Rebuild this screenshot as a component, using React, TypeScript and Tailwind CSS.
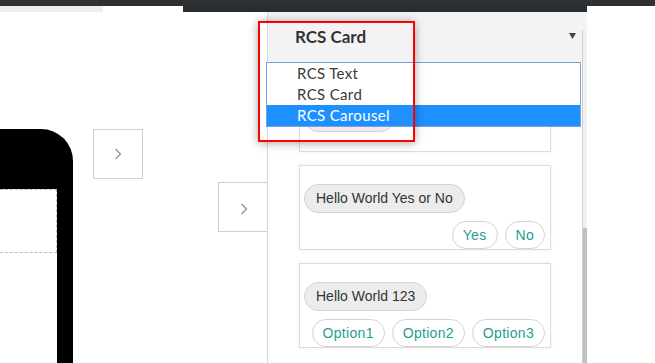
import React from 'react';

const Chevron = () => (
    <svg width="8" height="12" viewBox="0 0 8 12" fill="none">
        <polyline points="1.5,1 6.5,6 1.5,11" stroke="#8a8a8a" strokeWidth="1.1" />
    </svg>
);

const Chip = ({ text }: { text?: string }) => (
    <div
        className={
            'h-[29px] self-start flex items-center px-[11px] rounded-full bg-[#ececec] border border-[#d3d3d3] text-[14px] text-[#333] font-[\'Liberation_Sans\',sans-serif] ' +
            (text ? '' : 'w-[91px]')
        }
    >
        {text}
    </div>
);

const Reply = ({ text }: { text: string }) => (
    <div className="h-[28px] flex items-center px-[10px] rounded-full bg-white border border-[#d4d4d4] text-[14px] tracking-[0.3px] text-[#1f9e90] font-['Liberation_Sans',sans-serif]">
        {text}
    </div>
);

const Card = ({ chip, replies, top = 18 }: { chip?: string; replies?: string[]; top?: number }) => (
    <div
        className={
            'w-[252px] h-[85px] shrink-0 flex flex-col bg-white border border-[#dcdcdc] pl-[4px] pr-[5px] shadow-[0_0_4px_rgba(0,0,0,0.05)] ' +
            (top === 18 ? 'pt-[18px]' : 'pt-[35px]')
        }
    >
        <Chip text={chip} />
        {replies && (
            <div className="mt-[8px] flex justify-end gap-[7px]">
                {replies.map((r) => (
                    <Reply key={r} text={r} />
                ))}
            </div>
        )}
    </div>
);

export default function App() {
    return (
        <div className="w-[655px] h-[363px] relative overflow-hidden bg-white font-['Lato',sans-serif]">
            <div className="h-[6px] bg-[#2e3134]" />
            <div className="h-[6px] flex">
                <div className="w-[103px] bg-[#eeeeee]" />
                <div className="w-[80px] bg-white" />
                <div className="w-[404px] bg-[#2a2d30]" />
                <div className="flex-1 bg-white" />
            </div>

            <div className="h-[351px] flex">
                {/* left preview area */}
                <div className="w-[267px] flex items-start pt-[117px]">
                    <div className="w-[73px] self-stretch bg-black rounded-tr-[32px] pt-[60px] pr-[16px] flex">
                        <div className="flex-1 bg-white">
                            <div className="h-[64px] border-t border-r border-b border-dashed border-[#bdbdbd]" />
                        </div>
                    </div>
                    <div className="ml-[20px] w-[50px] h-[50px] border border-[#cfcfcf] bg-white flex items-center justify-center">
                        <Chevron />
                    </div>
                    <div className="ml-[75px] mt-[53px] w-[49px] h-[50px] border-l border-t border-b border-[#cfcfcf] bg-white flex items-center justify-center pt-[3px] pl-[2px]">
                        <Chevron />
                    </div>
                </div>

                {/* right panel */}
                <div className="w-[320px] border-l border-[#d9d9d9] flex">
                    <div className="flex-1 flex flex-col overflow-hidden">
                        <div className="h-[50px] shrink-0 bg-[#f3f3f3] flex items-center justify-between pl-[27px] pr-[6px] relative z-10">
                            <span className="text-[17px] font-bold text-[#333]">RCS Card</span>
                            <svg width="7" height="6" viewBox="0 0 7 6" className="mt-[-2px]">
                                <polygon points="0,0 7,0 3.5,6" fill="#444" />
                            </svg>
                        </div>
                        <div className="flex-1 bg-white flex flex-col gap-[13px] pl-[31px] pt-[5px]">
                            <Card top={35} />
                            <Card chip="Hello World Yes or No" replies={['Yes', 'No']} />
                            <Card chip="Hello World 123" replies={['Option1', 'Option2', 'Option3']} />
                        </div>
                    </div>
                    <div className="w-[5px] flex flex-col">
                        <div className="h-[18px] bg-[#f3f3f3]" />
                        <div className="flex-1 border-l border-[#cfcfcf] bg-[#f1f1f1] flex flex-col justify-end">
                            <div className="h-[135px] bg-[#c1c1c1]" />
                        </div>
                    </div>
                </div>
                <div className="flex-1 bg-white" />
            </div>

            {/* open select list */}
            <div className="absolute left-[266px] top-[62px] w-[315px] border border-[#7b9fda] bg-white text-[15px] tracking-[0.35px] text-[#3a3a3a] z-20">
                <div className="h-[21px] flex items-center pl-[30px]">RCS Text</div>
                <div className="h-[21px] flex items-center pl-[30px]">RCS Card</div>
                <div className="h-[21px] flex items-center pl-[30px] bg-[#1e90ff] text-white">RCS Carousel</div>
            </div>

            {/* highlight frame */}
            <div className="absolute left-[258px] top-[21px] w-[157px] h-[121px] border-2 border-[#ff0000] shadow-[0_1px_9px_rgba(0,0,0,0.35)] z-30" />
        </div>
    );
}
